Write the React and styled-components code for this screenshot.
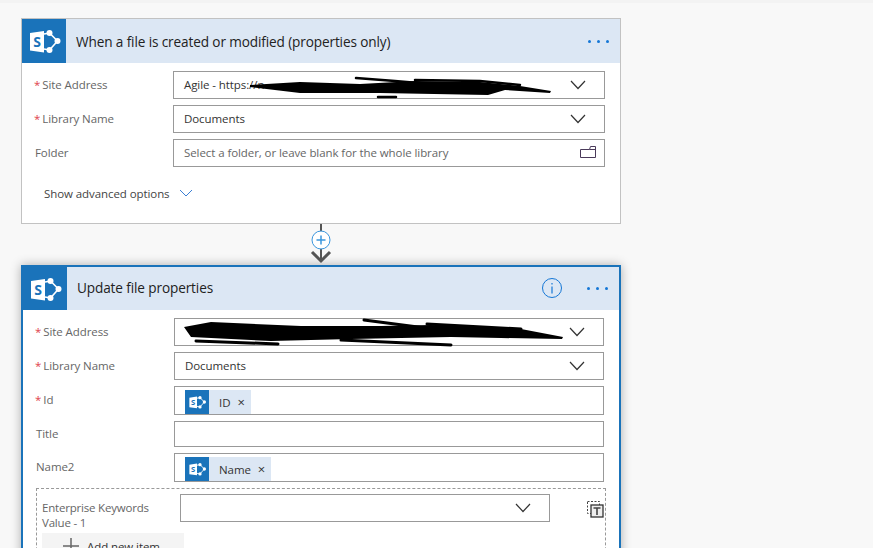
import React from 'react';
import styled, { createGlobalStyle } from 'styled-components';

const GlobalStyle = createGlobalStyle`
    html, body {
        margin: 0;
        height: 548px;
        overflow: hidden;
        background: #f8f8f8;
    }

    body {
        font-family: "Open Sans", "Liberation Sans", sans-serif;
        color: #333;
    }
`

const Page = styled.div`
    height: 548px;
    overflow: hidden;
    box-sizing: border-box;
    padding: 15px 0 0 21px;
    border-top: 3px solid #f3f3f3;
`

const Card = styled.section`
    width: 600px;
    box-sizing: border-box;
    background: white;
    border: ${(p) => (p.$active ? '2px solid #1a73ba' : '1px solid #c2c2c2')};
    box-shadow: ${(p) => (p.$active ? '0 0 10px rgba(0, 0, 0, .3)' : 'none')};
`

const Header = styled.header`
    display: flex;
    align-items: center;
    height: ${(p) => (p.$active ? 43 : 44)}px;
    background: #dce7f4;
`

const IconBox = styled.div`
    display: flex;
    flex: none;
    align-self: stretch;
    align-items: center;
    width: ${(p) => p.$size}px;
    background: #1a73ba;
`

const Title = styled.h2`
    flex: 1;
    margin: 0 0 ${(p) => (p.$active ? 2 : 0)}px 10px;
    font-size: 13.6px;
    font-weight: 400;
    letter-spacing: -.12px;
    color: #222;
`

const Dots = styled.div`
    display: flex;
    gap: 6px;
    margin-right: 11px;

    span {
        width: 3px;
        height: 3px;
        border-radius: 50%;
        background: #1577d6;
    }
`

const InfoIcon = styled.svg`
    width: 22px;
    height: 22px;
    margin: 0 24px 2px 0;
`

const Rows = styled.div`
    display: flex;
    flex-direction: column;
    gap: 6px;
    padding: 8px 15px 0 13px;
`

const Row = styled.div`
    display: grid;
    grid-template-columns: 138px 1fr;
    align-items: center;
`

const Label = styled.label`
    padding-bottom: 2px;
    font-size: 11.5px;
    letter-spacing: -.08px;
    color: #666;
`

const Star = styled.span`
    margin: 0 2px 0 -1px;
    color: #e0424c;
`

const Field = styled.div`
    position: relative;
    display: flex;
    align-items: center;
    justify-content: space-between;
    box-sizing: border-box;
    height: ${(p) => p.$height || 28}px;
    padding: 0 10px 2px;
    background: white;
    border: 1px solid #999;
    font-size: 11.5px;
    letter-spacing: -.08px;
    color: ${(p) => (p.$placeholder ? '#666' : '#333')};
`

const ChipField = styled(Field)`
    align-items: flex-end;
    justify-content: flex-start;
    padding: 0 10px;
`

const Chip = styled.div`
    display: flex;
    align-items: center;
    height: 24px;
    background: #dce7f4;
    font-size: 11.5px;
    letter-spacing: -.08px;
    color: #333;

    b {
        margin-left: 10px;
        font-weight: 400;
    }

    i {
        margin: 0 6px 0 7px;
        font-style: normal;
        font-size: 13px;
    }
`

const Chevron = styled.svg`
    flex: none;
    width: 16px;
    height: 10px;
    margin: 2px 8px 0 0;
`

const FolderIcon = styled.svg`
    flex: none;
    width: 16px;
    height: 12px;
    margin-right: -2px;
`

const Advanced = styled.div`
    display: flex;
    align-items: center;
    gap: 9px;
    box-sizing: border-box;
    height: 56px;
    padding: 0 0 4px 22px;
    font-size: 11.5px;
    letter-spacing: -.08px;
    color: #444;
`

const Connector = styled.svg`
    display: block;
    width: 24px;
    height: 41px;
    margin-left: 288px;
`

const Scribble = styled.svg`
    position: absolute;
    top: -1px;
    left: -1px;
    width: 432px;
    height: 28px;
    overflow: visible;
    pointer-events: none;
`

const Repeat = styled.div`
    display: flex;
    flex-direction: column;
    margin-right: -2px;
    padding: 5px 0 20px 5px;
    border: 1px dashed #999;
`

const RepeatRow = styled.div`
    display: flex;
    align-items: flex-start;

    ${Field} {
        width: 370px;
    }
`

const RepeatLabel = styled(Label)`
    width: 138px;
    padding: 6px 0 0;
    line-height: 15px;
    letter-spacing: -.2px;
`

const TextIcon = styled.svg`
    width: 18px;
    height: 18px;
    margin: 6px 0 0 36px;
`

const AddButton = styled.button`
    display: flex;
    align-items: center;
    gap: 8px;
    width: 142px;
    height: 26px;
    margin-top: 3px;
    padding: 0 0 0 21px;
    border: 0;
    background: #f4f4f4;
    font-family: inherit;
    font-size: 11.5px;
    letter-spacing: -.08px;
    color: #333;
`

const SharePointLogo = ({ size }) => (
    <IconBox $size={size}>
        <svg viewBox='0 0 44 44' width={size} height={size}>
            <path d='M27.500 14 L35.500 22 L27.500 31 M22 15 L27.500 14 M22 30 L27.500 31' fill='none' stroke='white' strokeWidth='1.600' />
            <circle cx='27.500' cy='14' r='3' fill='white' />
            <circle cx='35.500' cy='22' r='3' fill='white' />
            <circle cx='27.500' cy='31' r='3' fill='white' />
            <path d='M8 14 L22 12 L22 33.500 L8 31.500 Z' fill='white' />
            <text x='15' y='28' fontFamily='"Open Sans", sans-serif' fontSize='14' fontWeight='700' fill='#1a73ba' textAnchor='middle'>S</text>
        </svg>
    </IconBox>
)

const DownArrow = () => (
    <Chevron viewBox='0 0 16 10'>
        <path d='M1 1 L8 8.500 L15 1' fill='none' stroke='#333' strokeWidth='1.200' />
    </Chevron>
)

const Required = () => <Star>*</Star>

const Card1Scribble = () => (
    <Scribble viewBox='173 71 432 28'>
        <path d='M250 85 L300 82 L360 84 L415 81 L480 82 L520 86 L551 91 L550 93 L505 90 L488 95 L380 93 L300 93 L250 87 Z' fill='black' />
        <g fill='none' stroke='black' strokeLinecap='round'>
            <path d='M356 78 L395 81 L430 84' strokeWidth='2.500' />
            <path d='M415 80 L480 81 L520 85' strokeWidth='2.500' />
            <path d='M378 97 L396 97' strokeWidth='2.500' />
        </g>
    </Scribble>
)

const Card2Scribble = () => (
    <Scribble viewBox='174 318 430 28'>
        <path d='M183 327 L210 322 L300 326 L380 326 L430 325 L520 329 L562 337 L561 339 L500 338 L450 337 L350 339 L270 341 L190 337 Z' fill='black' />
        <g fill='none' stroke='black' strokeLinecap='round'>
            <path d='M195 341 L277 344' strokeWidth='3' />
            <path d='M340 340 L450 345' strokeWidth='3' />
            <path d='M363 320 L440 330' strokeWidth='3' />
            <path d='M426 324 L520 329' strokeWidth='3' />
        </g>
    </Scribble>
)

const App = () => {
    return (
        <Page>
            <GlobalStyle />

            <Card>
                <Header>
                    <SharePointLogo size={44} />
                    <Title>When a file is created or modified (properties only)</Title>
                    <Dots><span /><span /><span /></Dots>
                </Header>

                <Rows>
                    <Row>
                        <Label><Required />Site Address</Label>
                        <Field>
                            Agile - https://n
                            <DownArrow />
                            <Card1Scribble />
                        </Field>
                    </Row>
                    <Row>
                        <Label><Required />Library Name</Label>
                        <Field>Documents<DownArrow /></Field>
                    </Row>
                    <Row>
                        <Label>Folder</Label>
                        <Field $placeholder>
                            Select a folder, or leave blank for the whole library
                            <FolderIcon viewBox='0 0 16 12'>
                                <path d='M.500 3.500 H9.500 L10.500 .500 H15.500 V11.500 H.500 Z M9.500 3.500 H15.500' fill='none' stroke='#4a3a5a' />
                            </FolderIcon>
                        </Field>
                    </Row>
                </Rows>

                <Advanced>
                    Show advanced options
                    <svg viewBox='0 0 14 8' width='14' height='8'>
                        <path d='M1 1 L7 7 L13 1' fill='none' stroke='#3a7fd5' />
                    </svg>
                </Advanced>
            </Card>

            <Connector viewBox='0 0 24 41'>
                <path d='M12 0 V37' stroke='#555' strokeWidth='2' />
                <circle cx='12' cy='16' r='9' fill='white' stroke='#3a96dd' />
                <path d='M7.500 16 H16.500 M12 11.500 V20.500' stroke='#3a96dd' strokeWidth='1.500' />
                <path d='M3 28 L12 37 L21 28' fill='none' stroke='#555' strokeWidth='3' />
            </Connector>

            <Card $active>
                <Header $active>
                    <SharePointLogo size={44} />
                    <Title $active>Update file properties</Title>
                    <InfoIcon viewBox='0 0 22 22'>
                        <circle cx='11' cy='11' r='9.500' fill='none' stroke='#1577d6' />
                        <path d='M11 9.500 V16.500 M11 6 V7.500' stroke='#1577d6' strokeWidth='1.200' />
                    </InfoIcon>
                    <Dots><span /><span /><span /></Dots>
                </Header>

                <Rows>
                    <Row>
                        <Label><Required />Site Address</Label>
                        <Field>
                            <span />
                            <DownArrow />
                            <Card2Scribble />
                        </Field>
                    </Row>
                    <Row>
                        <Label><Required />Library Name</Label>
                        <Field>Documents<DownArrow /></Field>
                    </Row>
                    <Row>
                        <Label><Required />Id</Label>
                        <ChipField $height={29}>
                            <Chip>
                                <SharePointLogo size={24} />
                                <b>ID</b>
                                <i>×</i>
                            </Chip>
                        </ChipField>
                    </Row>
                    <Row>
                        <Label>Title</Label>
                        <Field $height={26} />
                    </Row>
                    <Row>
                        <Label>Name2</Label>
                        <ChipField $height={29}>
                            <Chip>
                                <SharePointLogo size={24} />
                                <b>Name</b>
                                <i>×</i>
                            </Chip>
                        </ChipField>
                    </Row>

                    <Repeat>
                        <RepeatRow>
                            <RepeatLabel>Enterprise Keywords<br />Value - 1</RepeatLabel>
                            <Field><span /><DownArrow /></Field>
                            <TextIcon viewBox='0 0 18 18'>
                                <rect x='1.500' y='1.500' width='12' height='12' fill='none' stroke='#444' strokeDasharray='2 1.500' />
                                <rect x='5' y='5' width='12' height='12' fill='#eee' stroke='#333' strokeWidth='1.300' />
                                <path d='M7.500 8 H14.500 M11 8 V15' stroke='#444' strokeWidth='1.600' />
                            </TextIcon>
                        </RepeatRow>
                        <AddButton>
                            <svg viewBox='0 0 16 16' width='16' height='16'>
                                <path d='M0 8 H16 M8 0 V16' stroke='#666' strokeWidth='1.500' />
                            </svg>
                            Add new item
                        </AddButton>
                    </Repeat>
                </Rows>
            </Card>
        </Page>
    )
}

export default App;
